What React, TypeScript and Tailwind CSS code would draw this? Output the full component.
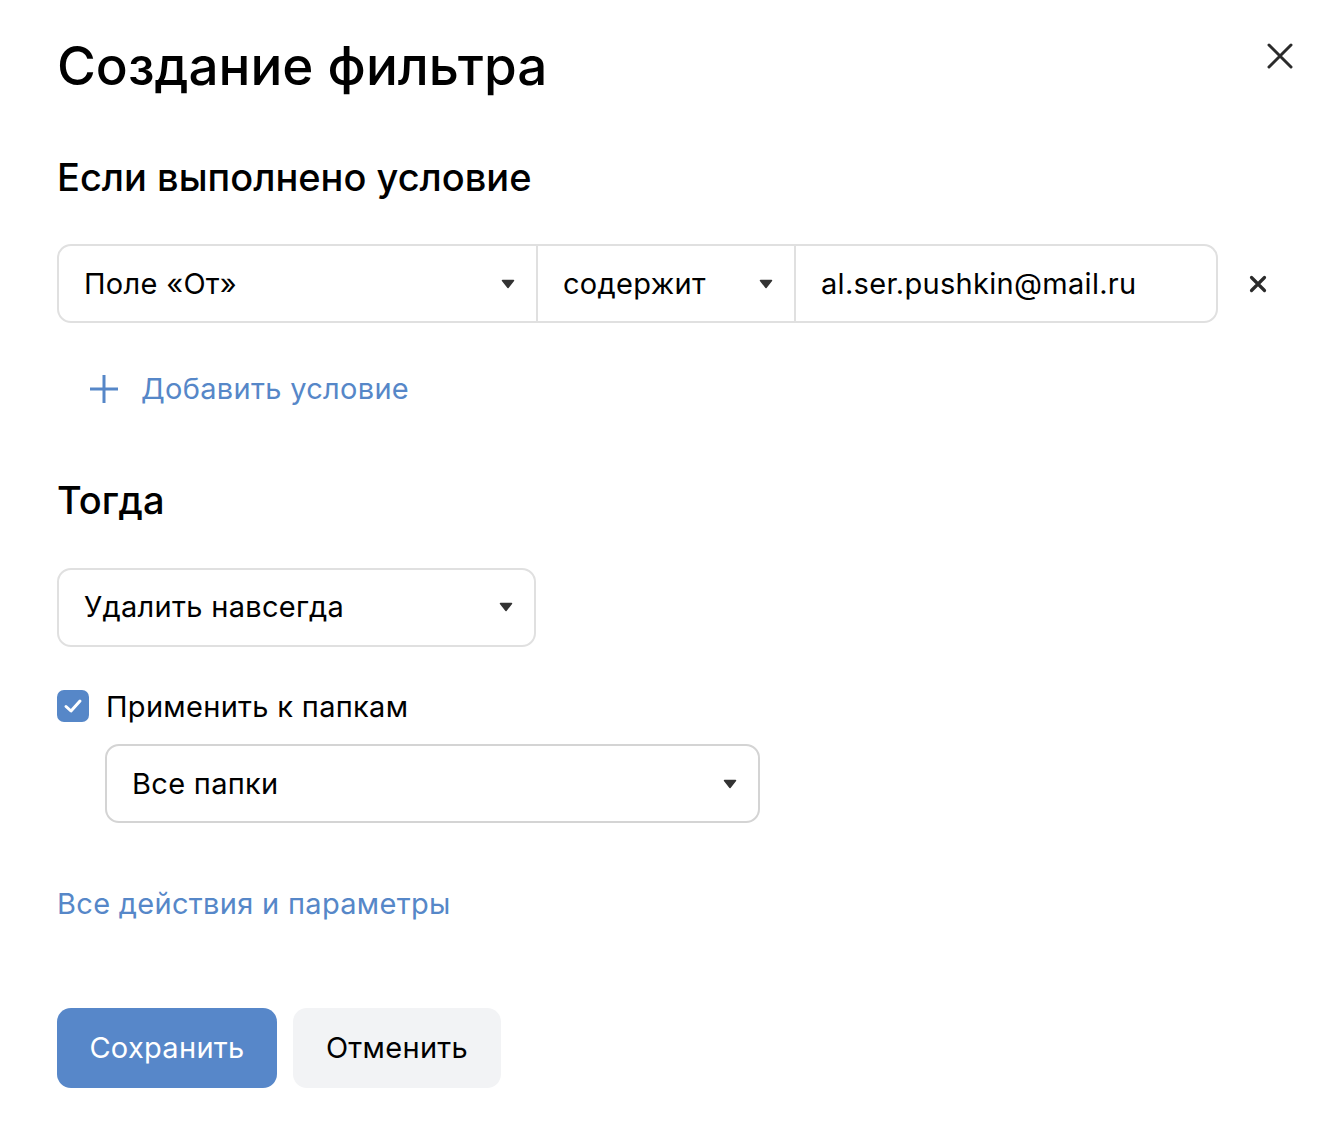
import React from "react";

const Caret = () => (
  <svg width="14" height="10" viewBox="0 0 14 10" className="shrink-0">
    <path d="M1.5 1.5 L12.5 1.5 L7 8.5 Z" fill="#333" stroke="#333" strokeWidth="1.5" strokeLinejoin="round" />
  </svg>
);

export default function App() {
  return (
    <div className="w-[1344px] h-[1146px] bg-white text-black" style={{ fontFamily: "Inter, 'Noto Sans', sans-serif" }}>
      <div className="relative px-[57px] pt-[30px]">
        <div className="flex items-start justify-between">
          <h1 className="text-[53px] leading-[72px] font-medium">Создание фильтра</h1>
          <button className="absolute right-[50px] top-[42px] w-[28px] h-[28px] flex items-center justify-center">
            <svg width="26" height="26" viewBox="0 0 26 26">
              <path d="M2 2 L24 24 M24 2 L2 24" stroke="#2b2b2b" strokeWidth="3" strokeLinecap="round" />
            </svg>
          </button>
        </div>

        <h2 className="mt-[51px] text-[38px] leading-[48px] font-medium">Если выполнено условие</h2>

        <div className="mt-[43px] flex items-center">
          <div className="flex w-[1161px] h-[79px] border-2 border-[#e0e0e0] rounded-[14px] text-[29px] tracking-[0.3px]">
            <div className="w-[479px] flex items-center justify-between pl-[25px] pr-[21px] border-r-2 border-[#e0e0e0]">
              <span>Поле «От»</span>
              <Caret />
            </div>
            <div className="w-[258px] flex items-center justify-between pl-[25px] pr-[21px] border-r-2 border-[#e0e0e0]">
              <span>содержит</span>
              <Caret />
            </div>
            <div className="flex-1 flex items-center pl-[25px]">
              <span>al.ser.pushkin@mail.ru</span>
            </div>
          </div>
          <button className="ml-[31px] w-[18px] h-[18px] flex items-center justify-center">
            <svg width="18" height="18" viewBox="0 0 18 18">
              <path d="M2.5 2.5 L15.5 15.5 M15.5 2.5 L2.5 15.5" stroke="#2b2b2b" strokeWidth="3.2" strokeLinecap="round" />
            </svg>
          </button>
        </div>

        <div className="mt-[44px] ml-[33px] flex items-center text-[29px] tracking-[0.3px] text-[#5687c8]">
          <svg width="28" height="28" viewBox="0 0 28 28" className="shrink-0">
            <path d="M14 0 V28 M0 14 H28" stroke="#5687c8" strokeWidth="3" />
          </svg>
          <span className="ml-[23px]">Добавить условие</span>
        </div>

        <h2 className="mt-[65px] text-[38px] leading-[48px] font-medium">Тогда</h2>

        <div className="mt-[44px] w-[479px] h-[79px] border-2 border-[#e0e0e0] rounded-[14px] flex items-center justify-between pl-[25px] pr-[21px] text-[29px] tracking-[0.3px]">
          <span>Удалить навсегда</span>
          <Caret />
        </div>

        <div className="mt-[38px] flex items-center">
          <div className="w-[32px] h-[32px] rounded-[7px] bg-[#5687c8] flex items-center justify-center">
            <svg width="20" height="16" viewBox="0 0 20 16">
              <path d="M3 8.5 L8 13 L17 3" stroke="white" strokeWidth="3" fill="none" strokeLinecap="round" strokeLinejoin="round" />
            </svg>
          </div>
          <span className="ml-[17px] text-[29px] tracking-[0.3px]">Применить к папкам</span>
        </div>

        <div className="mt-[16px] ml-[48px] w-[655px] h-[79px] border-2 border-[#d4d4d4] rounded-[14px] flex items-center justify-between pl-[25px] pr-[21px] text-[29px] tracking-[0.3px]">
          <span>Все папки</span>
          <Caret />
        </div>

        <div className="mt-[59px] text-[29px] text-[#5687c8] tracking-[0.3px]">Все действия и параметры</div>

        <div className="mt-[82px] flex gap-[16px]">
          <button className="w-[220px] h-[80px] rounded-[14px] bg-[#5787c9] text-white text-[29px] tracking-[0.3px]">Сохранить</button>
          <button className="w-[208px] h-[80px] rounded-[14px] bg-[#f2f3f5] text-black text-[29px] tracking-[0.3px]">Отменить</button>
        </div>
      </div>
    </div>
  );
}
